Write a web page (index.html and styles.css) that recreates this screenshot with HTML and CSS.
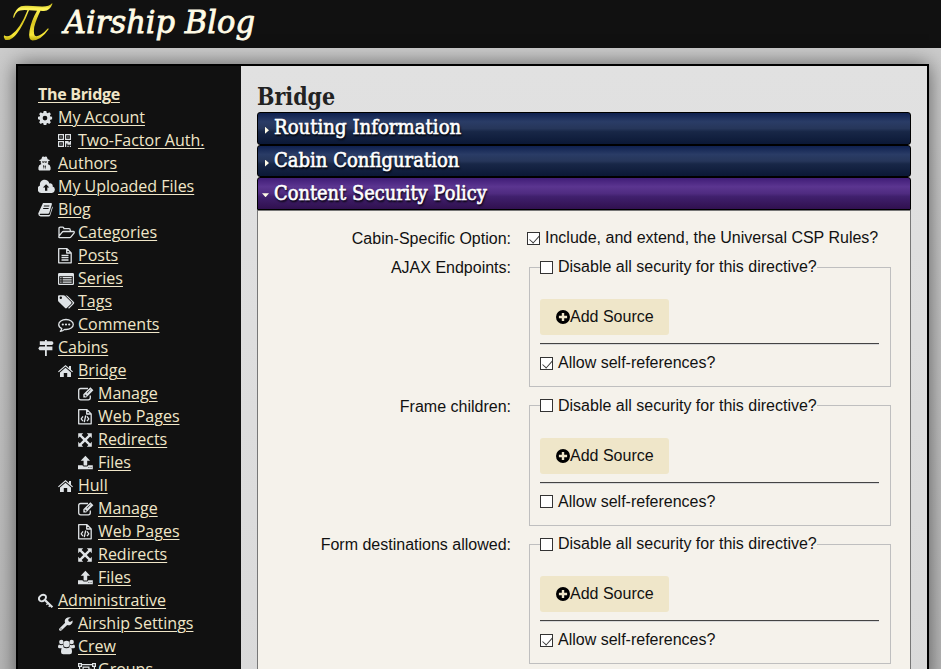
FILE: index.html
```
<!DOCTYPE html>
<html lang="en">
<head>
<meta charset="utf-8">
<title>Airship Blog</title>
<link rel="stylesheet" href="styles.css">
</head>
<body>
<svg class="sprite" aria-hidden="true">
<symbol id="gear" viewBox="0 0 16 16"><path fill-rule="evenodd" d="M5.700 1h2.600l.4 1.800 1 .4 1.600-1 1.600 1.700-1 1.500.4 1 1.800.4v2.500l-1.800.4-.4 1 1 1.500-1.700 1.700-1.500-1-1 .4-.4 1.800H5.700l-.4-1.800-1-.4-1.600 1-1.600-1.700 1-1.500-.4-1-1.800-.4V6.800l1.800-.4.4-1-1-1.500 1.700-1.700 1.500 1 1-.4zM7 5.700a2.350 2.350 0 1 0 0 4.700 2.350 2.350 0 0 0 0-4.700z"/></symbol>
<symbol id="qr" viewBox="0 0 16 16"><path fill-rule="evenodd" d="M0 1h6v6H0zm1.200 1.200v3.600h3.600V2.200zM7 1h6v6H7zm1.200 1.200v3.600h3.600V2.200zM0 8h6v6H0zm1.200 1.200v3.600h3.600V9.200zM2.400 3.400h1.200v1.200H2.400zM9.400 3.400h1.200v1.200H9.400zM2.400 10.400h1.200v1.200H2.400zM7 8h3.600v1.200h1.200V8H13v3.700H9.400v-1.200H8.200V14H7zm2.400 4.800h1.200V14H9.400zm2.400 0H13V14h-1.200z"/></symbol>
<symbol id="spy" viewBox="0 0 16 16"><path fill-rule="evenodd" d="M4.200.8 5.500.5l1 .5 1-.5 1.300.3.900 2.500 2 .7v.7l-1.600.6.2 1.600-.7 1.100 2.200 1.300.8 2.300v1.800l-.9 1H1.300l-.9-1v-1.800l.8-2.300 2.200-1.300-.7-1.100.2-1.600-1.600-.6V4l2-.7zM4 5.500v.8l1.700.4.8-.7.800.7 1.700-.4v-.8zM5 9.400l1 4 .3-3.400-.3-.8zm3 0-1 .3-.2.800.4 2.900z"/></symbol>
<symbol id="cloud" viewBox="0 0 18 16"><path fill-rule="evenodd" d="M3.900 14A3.900 3.900 0 0 1 2 6.500 4.700 4.700 0 0 1 11.400 4.400a2.600 2.600 0 0 1 3.200 3.200A3.300 3.300 0 0 1 14 14zM8.100 5.200 4.900 8.600H7v3.100h2.300V8.600h2z"/></symbol>
<symbol id="book" viewBox="0 0 16 16"><path fill-rule="evenodd" d="M5 1h8q1.200.1.900 1.300l-2.600 8.400q-.3 1-1.300 1H2.400q-.8 0-.7.700.1.600 1 .6h8.200q.8 0 1-.8l2.300-7.800q.8.300.5 1.300l-2.400 7.500q-.5 1.300-1.700 1.300h-8Q.2 14.100.2 11.600zm1 2.600-.3.900h5.500l.3-.9zM5.300 6 5 6.900h5.500l.3-.9z"/></symbol>
<symbol id="folder" viewBox="0 0 18 16"><path class="line" d="M1 12.500V3.500q0-1.300 1.300-1.300h2.400q1.200 0 1.200 1.500H11q1.300 0 1.300 1.500v1.300H5.400q-.8 0-1.400.8L1 11.200q-.6 1.500.6 1.500h10q.8 0 1.400-.8l3-3.800q.7-1.500-.5-1.600h-3.200"/></symbol>
<symbol id="doc" viewBox="0 0 16 16"><path class="line" d="M.7.700H9l4.200 4.200v9.900H.7zM8.700.7V5h4.300M3.500 7.500h7M3.500 9.700h7M3.500 12h7"/></symbol>
<symbol id="series" viewBox="0 0 18 16"><path fill-rule="evenodd" d="M1.300 2h13.400Q16 2 16 3.300v9.400q0 1.300-1.300 1.300H1.300Q0 14 0 12.700V3.300Q0 2 1.300 2zM1.200 5.200v7.500h13.600V5.200zM2.300 6.100h1.200v1.200H2.300zm2.300 0h9.100v1.200H4.600zM2.300 8.300h1.200v1.200H2.300zm2.300 0h9.100v1.200H4.600zM2.300 10.500h1.200v1.200H2.300zm2.300 0h9.100v1.200H4.600z"/></symbol>
<symbol id="tags" viewBox="0 0 18 16"><path fill-rule="evenodd" d="M0 2.300Q0 1.200 1.100 1.200h4.300q1 0 1.800.8l6 6q.8.900 0 1.700l-4.400 4.400q-.9.700-1.700 0L.9 8Q0 7.200 0 6.200zm2.800.3a1.200 1.200 0 1 0 0 2.400 1.200 1.200 0 0 0 0-2.400z"/><path d="M7.500 1.200q1.300 0 2.200.9l6.200 6q.8.800 0 1.700l-4.400 4.400q-.8.600-1.500-.1l4.300-4.300q.8-.9 0-1.800z"/></symbol>
<symbol id="comment" viewBox="0 0 18 16"><path class="line" d="M8 2.500c4 0 7.300 2.200 7.300 5s-3.300 5-7.300 5l-1.500-.1Q4.900 14 2.300 14.300q1.200-.9 1.500-2.700C2 10.700.7 9.200.7 7.500c0-2.800 3.300-5 7.300-5z"/><circle cx="4.800" cy="7.500" r="1.100"/><circle cx="8" cy="7.500" r="1.100"/><circle cx="11.200" cy="7.500" r="1.100"/></symbol>
<symbol id="signs" viewBox="0 0 16 16"><path d="M7 0h1.800v1.300h5.500l1.300 1.800-1.300 1.900H1.800V1.300H7zM7 5h1.800v1.500h5.600v3.700H8.800V16H7v-5.800H1.600L.3 8.400l1.300-1.900H7z"/></symbol>
<symbol id="home" viewBox="0 0 16 16"><path d="M7.500 2 11 5V3h2v3.800l2 1.600-.8.900L7.500 3.600.8 9.300 0 8.400zM7.500 4.700 13 9.400V14H9.200v-4H5.800v4H2V9.400z"/></symbol>
<symbol id="edit" viewBox="0 0 18 16"><path class="line" d="M12.300 9.500v2.300q0 2-2 2H2.700q-2 0-2-2V4.500q0-2 2-2H10"/><path fill-rule="evenodd" d="m12.400 1.200 3 3-7.200 7.200H5.300V8.300zM6.700 8.700 6.300 9.500h.9v.9l1 .1.600-.6-1.500-1.500zm5.600-5.300-3.600 3.600.4.4 3.600-3.600z"/></symbol>
<symbol id="code" viewBox="0 0 16 16"><path class="line" d="M.7.700H9l4.200 4.200v9.900H.7zM8.700.7V5h4.300M5 7.300 3.200 9.800 5 12.200M9 7.300l1.800 2.500L9 12.200M7.700 6.500l-1.400 6.600"/></symbol>
<symbol id="arrows" viewBox="0 0 16 16"><path d="M.2 1.200h5L3.600 2.900 7 6.300l3.400-3.400-1.600-1.700h5v5l-1.600-1.700L8.800 8l3.400 3.400 1.600-1.600v5h-5l1.600-1.700L7 9.700l-3.400 3.400 1.600 1.700h-5v-5l1.600 1.600L5.200 8 1.800 4.600.2 6.200z"/></symbol>
<symbol id="upload" viewBox="0 0 16 16"><path fill-rule="evenodd" d="m7.400.8 4.700 5H9.200v4.600H5.600V5.800H2.700zM0 10.200h4.500q.4 1.300 1.700 1.300h2.400q1.300 0 1.700-1.300h4.500v4H0zm10.400 2v.9h.9v-.9zm2.200 0v.9h.9v-.9z"/></symbol>
<symbol id="key" viewBox="0 0 18 16"><path class="line thick" d="M2 3.300q2.600-2.700 5.400-.8 1.500 2-.8 4.600-2.500 2.100-4.600.7Q-.2 5.700 2 3.300z"/><path d="m7.700 6.200 7.500 7.300-1.600 1.400-1.500-1.500-.9.900-1-1 .8-.9-1.100-1.100-1 1-1-1 1-.9L6.300 7.900z"/></symbol>
<symbol id="wrench" viewBox="0 0 16 16"><path fill-rule="evenodd" d="M13.100 1.500 10.400 3v2l1.600.9 2.700-1.500q.3 3-2 4.300-1.800.9-3.500.2l-5.800 5.600q-1 .7-1.900-.1-.9-1-.1-1.900l5.700-5.800Q6 4 8.200 2.200q2.300-1.700 4.900-.7zM2.500 12.500v1h1v-1z"/></symbol>
<symbol id="users" viewBox="0 0 18 16"><circle cx="3.300" cy="3" r="2.200"/><circle cx="13.700" cy="3" r="2.200"/><circle cx="8.500" cy="5" r="3.200"/><path d="M1 5.500q2 1.200 3.900.2.200 1.600 1 2.500-1.100.2-1.900 1H1.500Q0 9.200 0 7.700T1 5.500zm15 0q-2 1.200-3.900.2-.2 1.600-1 2.500 1.100.2 1.900 1h2.500Q17 9.200 17 7.700t-1-2.200zM5.200 8.300q3.300 2 6.600 0Q14 8.600 14 13q0 2.300-2.300 2.300H5.300Q3 15.300 3 13q0-4.400 2.200-4.700z"/></symbol>
<symbol id="group" viewBox="0 0 18 16"><path fill-rule="evenodd" d="M0 1h4v1h10V1h4v4h-1v7h1v4h-4v-1H4v1H0v-4h1V5H0zm1.200 1.200v1.600h1.600V2.200zm14 0v1.600h1.600V2.200zM4 3.200V5H2.200v7H4v1.800h10V12h1.800V5H14V3.200zM4.500 4.500h7v2.200h2.200v6h-7v-2.200H4.500zm1.200 1.200v3.600h4.600V5.700z"/></symbol>
<symbol id="plus" viewBox="0 0 14 14"><path fill-rule="evenodd" d="M7 0a7 7 0 1 0 0 14A7 7 0 0 0 7 0zM5.800 2.900h2.400v2.900h2.900v2.400H8.200v2.900H5.800V8.200H2.900V5.800h2.900z"/></symbol>
</svg>

<header class="masthead">
  <svg class="logo" viewBox="0 0 52 42"><defs><linearGradient id="gold" x1="0" y1="0" x2="0" y2="1"><stop offset="0" stop-color="#c3b512"/><stop offset=".15" stop-color="#fff65a"/><stop offset=".5" stop-color="#d8c51e"/><stop offset=".85" stop-color="#f7e837"/><stop offset="1" stop-color="#b9a80b"/></linearGradient></defs><path fill="url(#gold)" d="M12 17.500Q14 9 20 6.300q2-.8 7-.5l14 .6q7 .2 10-3.200l.5.500Q49 10.500 43 11q-2 0-3.500-.2Q35 20 33.200 27q-1.300 9.500 2.300 9.300 5-.6 11.500-8l.8.700Q40 40.300 31.500 40.500q-4.500-.5-3-9.500 1.500-10 7.500-20.300l-8-.4Q22 26 16 33.500 10 41.500 4 39.800q-2-2.300-1-4.500 3 2.200 7-.3Q19 29 26.500 10.200q-7.500-.5-10 1.500-2 1.500-3.500 6z"/></svg>
  <a class="site-title">Airship Blog</a>
</header>

<div class="frame">
  <nav class="sidebar">
    <a class="top">The Bridge</a>
    <ul>
      <li><svg><use href="#gear"/></svg><a>My Account</a></li>
      <li class="l2"><svg><use href="#qr"/></svg><a>Two-Factor Auth.</a></li>
      <li><svg><use href="#spy"/></svg><a>Authors</a></li>
      <li><svg class="wide"><use href="#cloud"/></svg><a>My Uploaded Files</a></li>
      <li><svg><use href="#book"/></svg><a>Blog</a></li>
      <li class="l2"><svg class="wide"><use href="#folder"/></svg><a>Categories</a></li>
      <li class="l2"><svg><use href="#doc"/></svg><a>Posts</a></li>
      <li class="l2"><svg class="wide"><use href="#series"/></svg><a>Series</a></li>
      <li class="l2"><svg class="wide"><use href="#tags"/></svg><a>Tags</a></li>
      <li class="l2"><svg class="wide"><use href="#comment"/></svg><a>Comments</a></li>
      <li><svg><use href="#signs"/></svg><a>Cabins</a></li>
      <li class="l2"><svg><use href="#home"/></svg><a>Bridge</a></li>
      <li class="l3"><svg class="wide"><use href="#edit"/></svg><a>Manage</a></li>
      <li class="l3"><svg><use href="#code"/></svg><a>Web Pages</a></li>
      <li class="l3"><svg><use href="#arrows"/></svg><a>Redirects</a></li>
      <li class="l3"><svg><use href="#upload"/></svg><a>Files</a></li>
      <li class="l2"><svg><use href="#home"/></svg><a>Hull</a></li>
      <li class="l3"><svg class="wide"><use href="#edit"/></svg><a>Manage</a></li>
      <li class="l3"><svg><use href="#code"/></svg><a>Web Pages</a></li>
      <li class="l3"><svg><use href="#arrows"/></svg><a>Redirects</a></li>
      <li class="l3"><svg><use href="#upload"/></svg><a>Files</a></li>
      <li><svg class="wide"><use href="#key"/></svg><a>Administrative</a></li>
      <li class="l2"><svg><use href="#wrench"/></svg><a>Airship Settings</a></li>
      <li class="l2"><svg class="wide"><use href="#users"/></svg><a>Crew</a></li>
      <li class="l3"><svg class="wide"><use href="#group"/></svg><a>Groups</a></li>
    </ul>
  </nav>
  <main class="content">
    <h1><span>Bridge</span></h1>
    <h2 class="bar"><i></i><span class="t1">Routing Information</span></h2>
    <h2 class="bar"><i></i><span class="t2">Cabin Configuration</span></h2>
    <h2 class="bar open"><i></i><span class="t3">Content Security Policy</span></h2>
    <div class="panel">
      <div class="row first"><div class="label">Cabin-Specific Option:</div><label class="check"><b class="box on"></b>Include, and extend, the Universal CSP Rules?</label></div>
      <div class="row"><div class="label">AJAX Endpoints:</div>
        <fieldset><legend><b class="box"></b>Disable all security for this directive?</legend>
          <button><svg><use href="#plus"/></svg>Add Source</button><hr><label class="check"><b class="box on"></b>Allow self-references?</label></fieldset></div>
      <div class="row"><div class="label">Frame children:</div>
        <fieldset><legend><b class="box"></b>Disable all security for this directive?</legend>
          <button><svg><use href="#plus"/></svg>Add Source</button><hr><label class="check"><b class="box"></b>Allow self-references?</label></fieldset></div>
      <div class="row"><div class="label">Form destinations allowed:</div>
        <fieldset><legend><b class="box"></b>Disable all security for this directive?</legend>
          <button><svg><use href="#plus"/></svg>Add Source</button><hr><label class="check"><b class="box on"></b>Allow self-references?</label></fieldset></div>
    </div>
  </main>
</div>
</body>
</html>
```
FILE: styles.css
```
* { box-sizing: border-box; }
html { height: 100%; overflow: hidden; }
body {
  margin: 0;
  height: 669px;
  overflow: hidden;
  background: linear-gradient(#ccc 48px, #b8b8b8 669px);
  font: 16px/18px "Liberation Sans", Arial, sans-serif;
  color: #111;
}
.sprite { display: none; }
.line { fill: none; stroke: currentColor; stroke-width: 1.3; stroke-linejoin: round; }
.thick { stroke-width: 1.900; }

.masthead {
  height: 48px;
  background: #111;
  display: flex;
  align-items: flex-start;
}
.logo { width: 52px; height: 42px; margin-left: 1px; flex: none; }
.site-title {
  margin: 3px 0 0 11px;
  font: italic 32px/38px "DejaVu Serif", serif;
  color: #fffbe6;
  -webkit-text-stroke: .8px #fffbe6;
  transform: scaleX(.955);
  transform-origin: 0 0;
  white-space: nowrap;
}

.frame {
  margin: 16px 12px 0 16px;
  height: 621px;
  border: 2px solid #000;
  border-bottom: 0;
  box-shadow: 0 0 20px rgba(0, 0, 0, .55);
  display: flex;
  background: linear-gradient(#e1e1e1, #dadada);
}
.sidebar {
  width: 223px;
  flex: none;
  padding: 17px 0 0 20px;
  overflow: hidden;
  height: 605px;
  background: #111;
  font: 16px/23px "Open Sans", "Noto Sans", sans-serif;
  color: #f0e6c8;
}
.sidebar a {
  text-decoration: underline;
  text-decoration-thickness: 1px;
  text-underline-offset: 2px;
}
.top { display: block; font-weight: 700; letter-spacing: -.3px; }
.sidebar ul { margin: 0; padding: 0; list-style: none; }
.sidebar li { display: flex; align-items: center; height: 23px; white-space: nowrap; }
.sidebar .l2 { padding-left: 20px; }
.sidebar .l3 { padding-left: 40px; }
.sidebar svg { width: 16px; height: 16px; margin-right: 4px; flex: none; color: #dfe3e6; fill: currentColor; }
.sidebar svg.wide { width: 18px; margin-right: 2px; }

.content { width: 670px; height: 605px; overflow: hidden; padding: 14px 0 0 16px; flex: none; }
h1 { margin: 0; height: 32px; font: bold 24px/34px "DejaVu Serif", serif; color: #222; }
h1 span, .bar span { display: inline-block; transform-origin: 0 50%; white-space: nowrap; }
h1 span { transform: scaleX(.86); }
.bar {
  margin: 0;
  width: 654px;
  height: 32.7px;
  display: flex;
  align-items: center;
  border: 1px solid #000;
  border-radius: 3px;
  background: linear-gradient(#0f2150, #2a3c66 28%, #26365a 50%, #182747 60%, #0b1836);
  color: #fff;
  font: 19.500px/30px "DejaVu Serif", serif;
  text-shadow: 1px 2px 2px #000;
  -webkit-text-stroke: .6px #fff;
}
.bar.open { background: linear-gradient(#401d77, #5b3590 28%, #4f2b80 50%, #40206d 60%, #30104f); border-radius: 3px 3px 0 0; }
.bar i { width: 4px; height: 7px; margin: 4px 5px 0 7px; background: #fffbe6; clip-path: polygon(0 0, 100% 50%, 0 100%); }
.bar.open i { width: 7px; height: 4px; margin: 3px 5px 0 4px; clip-path: polygon(0 0, 100% 0, 50% 100%); }
.t1 { transform: scaleX(.93); }
.t2 { transform: scaleX(.924); }
.t3 { transform: scaleX(.915); }

.panel { width: 654px; height: 520px; padding-top: 18px; border: 1px solid #777; background: #f5f2eb; }
.row { display: flex; height: 138.5px; }
.row.first { height: 29px; }
.label { width: 253px; margin-right: 18px; padding-top: 1px; text-align: right; flex: none; }
.first .check { height: 18px; margin-left: -2px; }
.check, legend { display: flex; align-items: center; white-space: nowrap; }
.box { width: 13px; height: 13px; margin-right: 5px; border: 1px solid #333; background: #fff; flex: none; }
.box.on::after { content: ""; display: block; width: 10px; height: 5px; margin: 2px 0 0 1px; border: solid #333; border-width: 0 0 1.500px 1.500px; transform: rotate(-48deg) scale(.9); }
fieldset { width: 362px; height: 129px; margin: 0; padding: 23px 11px 0 10px; border: 1px solid #bfbfbf; }
legend { height: 18px; padding: 0; }
button {
  display: flex;
  align-items: center;
  width: 129px;
  height: 36px;
  padding: 0 0 0 16px;
  border: 0;
  border-radius: 3px;
  background: #efe6c9;
  color: #111;
  font: 16px/18px "Liberation Sans", Arial, sans-serif;
  white-space: nowrap;
}
button svg { width: 14px; height: 14px; fill: #000; flex: none; }
hr { height: 2px; margin: 8px 0 9px; border: 0; border-top: 1px solid #444; border-bottom: 1px solid #d8d8d8; }
```
